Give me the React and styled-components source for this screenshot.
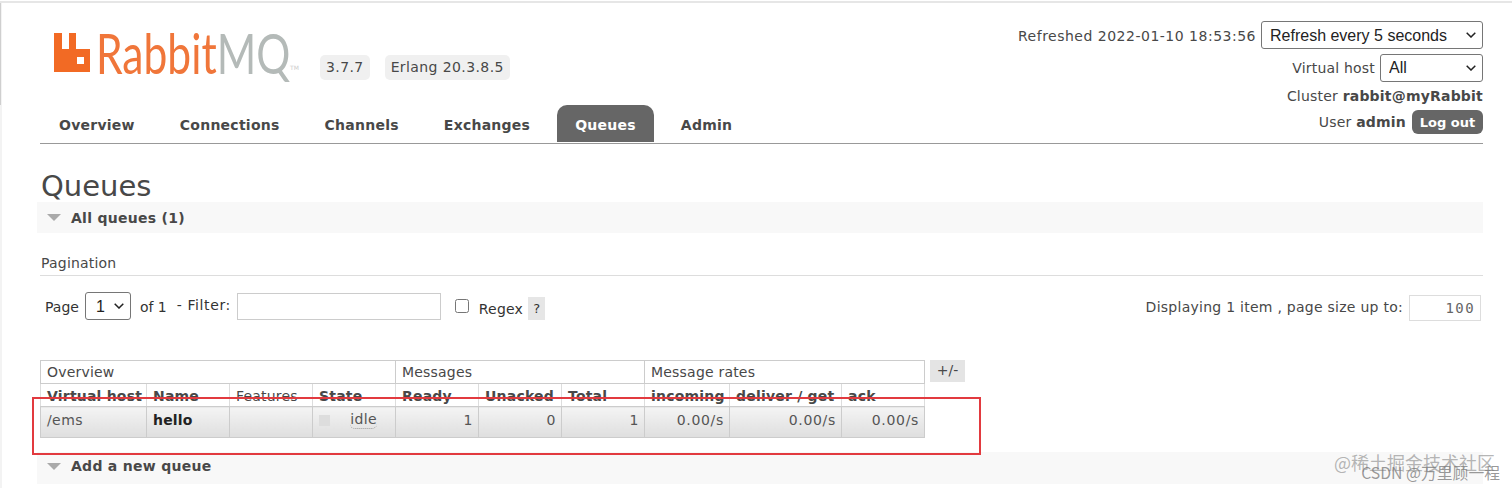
import styled, { createGlobalStyle } from "styled-components";

const GlobalStyle = createGlobalStyle`
  html, body { margin: 0; padding: 0; background: #fff; }
  body { font-family: "DejaVu Sans", Verdana, sans-serif; font-size: 14px; color: #484848; }
`;

const columns = [
  { name: "Virtual host", bold: true },
  { name: "Name", bold: true },
  { name: "Features" },
  { name: "State", bold: true },
  { name: "Ready", bold: true },
  { name: "Unacked", bold: true },
  { name: "Total", bold: true },
  { name: "incoming", bold: true },
  { name: "deliver / get", bold: true },
  { name: "ack", bold: true },
];

const widths = [106, 83, 83, 83, 83, 83, 83, 85, 112, 83];

const chevron =
  "data:image/svg+xml,%3Csvg xmlns='http://www.w3.org/2000/svg' width='10' height='6' viewBox='0 0 10 6'%3E%3Cpath d='M.7.7 5 5 9.3.7' fill='none' stroke='%23222' stroke-width='1.5'/%3E%3C/svg%3E";

function Logo() {
  return (
    <LogoWrap>
      <svg width="36" height="39" viewBox="0 0 36 39">
        <path
          fill="#f26a24"
          fillRule="evenodd"
          d="M0 0h8v16h7V0h7v16h14v23H0z M23 24v7h7v-7z"
        />
      </svg>
      <LogoText>
        <LogoRabbit>Rabbit</LogoRabbit>
        <LogoMq>MQ</LogoMq>
      </LogoText>
      <LogoTm>TM</LogoTm>
    </LogoWrap>
  );
}

function Collapse({ children, $low }) {
  return (
    <SectionBar $low={$low}>
      <Triangle />
      <SectionTitle>{children}</SectionTitle>
    </SectionBar>
  );
}

export default function App() {
  return (
    <Page>
      <GlobalStyle />
      <Header>
        <HeaderLeft>
          <Brand>
            <Logo />
            <Versions>
              <Pill>3.7.7</Pill>
              <Pill>Erlang 20.3.8.5</Pill>
            </Versions>
          </Brand>
          <Tabs>
            <Tab>Overview</Tab>
            <Tab>Connections</Tab>
            <Tab>Channels</Tab>
            <Tab>Exchanges</Tab>
            <Tab $active>Queues</Tab>
            <Tab>Admin</Tab>
          </Tabs>
        </HeaderLeft>
        <Meta>
          <MetaRow $height={34}>
            <Refreshed>Refreshed 2022-01-10 18:53:56</Refreshed>
            <Select $width={222} defaultValue="5">
              <option value="5">Refresh every 5 seconds</option>
            </Select>
          </MetaRow>
          <MetaRow $height={31}>
            <span>Virtual host</span>
            <Select $width={103} defaultValue="all">
              <option value="all">All</option>
            </Select>
          </MetaRow>
          <MetaRow $height={26}>
            <span>Cluster <b>rabbit@myRabbit</b></span>
          </MetaRow>
          <MetaRow $height={26}>
            <span>User <b>admin</b></span>
            <LogOut>Log out</LogOut>
          </MetaRow>
        </Meta>
      </Header>

      <Main>
        <Title>Queues</Title>
        <Collapse>All queues (1)</Collapse>
        <PaginationLabel>Pagination</PaginationLabel>
        <FilterRow>
          <FilterLeft>
            <FilterText>Page</FilterText>
            <PageSelect $width={46} defaultValue="1">
              <option value="1">1</option>
            </PageSelect>
            <OfText>of 1</OfText>
            <FilterLabel>- Filter:</FilterLabel>
            <FilterInput readOnly />
            <RegexBox type="checkbox" />
            <RegexText>Regex</RegexText>
            <Help>?</Help>
          </FilterLeft>
          <FilterRight>
            <FilterText>Displaying 1 item , page size up to:</FilterText>
            <PageSize readOnly value="100" />
          </FilterRight>
        </FilterRow>

        <TableRow>
          <Table>
            <colgroup>
              {widths.map((w, i) => (
                <col key={i} style={{ width: w }} />
              ))}
            </colgroup>
            <thead>
              <tr>
                <Group colSpan={4}>Overview</Group>
                <Group colSpan={3}>Messages</Group>
                <Group colSpan={3}>Message rates</Group>
              </tr>
              <tr>
                {columns.map((c) => (
                  <Head key={c.name} $bold={c.bold}>{c.name}</Head>
                ))}
              </tr>
            </thead>
            <tbody>
              <tr>
                <Cell>/ems</Cell>
                <Cell><b>hello</b></Cell>
                <Cell />
                <Cell>
                  <StateWrap>
                    <StateDot />
                    <Idle>idle</Idle>
                  </StateWrap>
                </Cell>
                <Cell $right>1</Cell>
                <Cell $right>0</Cell>
                <Cell $right>1</Cell>
                <Cell $right>0.00/s</Cell>
                <Cell $right>0.00/s</Cell>
                <Cell $right>0.00/s</Cell>
              </tr>
            </tbody>
          </Table>
          <PlusMinus>+/-</PlusMinus>
        </TableRow>

        <Collapse $low>Add a new queue</Collapse>
      </Main>

      <Highlight />
      <Watermark>@稀土掘金技术社区</Watermark>
      <Watermark $csdn>CSDN @万里顾一程</Watermark>
    </Page>
  );
}

const Page = styled.div`
  position: relative;
  width: 1512px;
  height: 485px;
  margin-top: 1px;
  overflow: hidden;
  border-top: 2px solid #e6e6e6;
  background:
    linear-gradient(#cfcfcf, #cfcfcf) 0 0 / 1px 102px no-repeat,
    linear-gradient(#f3f3f3, #f3f3f3) 0 0 / 2px 100% no-repeat;
`;

const Header = styled.header`
  display: flex;
  justify-content: space-between;
  align-items: flex-start;
  margin: 0 29px 0 40px;
  height: 140px;
  border-bottom: 1px solid #999;
`;

const HeaderLeft = styled.div`
  display: flex;
  flex-direction: column;
`;

const Brand = styled.div`
  display: flex;
  align-items: flex-end;
  height: 77px;
  padding-left: 14px;
`;

const LogoWrap = styled.div`
  position: relative;
  display: flex;
  align-items: flex-start;
  width: 266px;
  height: 47px;
  svg { flex-shrink: 0; margin-right: 6px; }
`;

const LogoText = styled.div`
  margin-top: -8px;
  white-space: nowrap;
  font-family: "Lato", sans-serif;
  font-weight: 400;
  font-size: 56px;
  line-height: 56px;
  transform: scaleX(0.76);
  transform-origin: left center;
`;

const LogoRabbit = styled.span`
  color: #f0763a;
`;

const LogoMq = styled.span`
  color: #b4bab8;
`;

const LogoTm = styled.span`
  position: absolute;
  left: 236px;
  top: 31px;
  font-size: 6px;
  color: #ccc;
`;

const Versions = styled.div`
  display: flex;
  gap: 15px;
`;

const Pill = styled.span`
  background: #f0f0f0;
  border-radius: 5px;
  padding: 0 6px;
  height: 25px;
  line-height: 25px;
  letter-spacing: 0.4px;
`;

const Tabs = styled.nav`
  display: flex;
  margin-top: 25px;
  padding-left: 1px;
  height: 37px;
`;

const Tab = styled.a`
  display: block;
  padding: 0 18px;
  margin-right: 9px;
  height: 37px;
  line-height: 40px;
  font-weight: bold;
  letter-spacing: 0.25px;
  border-radius: 10px 10px 0 0;
  color: ${(p) => (p.$active ? "#fff" : "#484848")};
  background: ${(p) => (p.$active ? "#666" : "transparent")};
`;

const Meta = styled.div`
  display: flex;
  flex-direction: column;
  align-items: flex-end;
  padding-top: 15px;
`;

const MetaRow = styled.div`
  display: flex;
  align-items: center;
  justify-content: flex-end;
  gap: 5px;
  height: ${(p) => p.$height}px;
  letter-spacing: 0.2px;
`;

const Refreshed = styled.span`
  letter-spacing: 0.5px;
  margin-top: 1px;
`;

const Select = styled.select`
  width: ${(p) => p.$width}px;
  height: 28px;
  box-sizing: border-box;
  padding: 0 18px 0 8px;
  appearance: none;
  font-family: "Liberation Sans", Arial, sans-serif;
  font-size: 16px;
  color: #222;
  background: #fff url("${chevron}") no-repeat right 6px center;
  border: 1px solid #767676;
  border-radius: 3px;
`;

const PageSelect = styled(Select)`
  margin-left: 6px;
  padding-left: 10px;
`;

const LogOut = styled.button`
  height: 24px;
  width: 71px;
  margin-left: 1px;
  padding: 0;
  border: 0;
  border-radius: 6px;
  background: #666;
  color: #fff;
  font-family: "DejaVu Sans", Verdana, sans-serif;
  font-size: 13px;
  font-weight: bold;
`;

const Main = styled.main`
  padding: 0 29px 0 40px;
`;

const Title = styled.h1`
  margin: 0;
  padding: 25px 0 0 1px;
  height: 33px;
  line-height: 35px;
  font-size: 29px;
  font-weight: normal;
  font-family: "DejaVu Sans", Verdana, sans-serif;
  color: #484848;
`;

const SectionBar = styled.div`
  display: flex;
  align-items: center;
  margin-left: -3px;
  height: ${(p) => (p.$low ? "28px" : "31px")};
  padding: ${(p) => (p.$low ? "0 0 4px 10px" : "0 0 0 10px")};
  background: #f8f8f8;
`;

const Triangle = styled.span`
  width: 0;
  height: 0;
  margin-right: 10px;
  border-left: 7px solid transparent;
  border-right: 7px solid transparent;
  border-top: 7px solid #aaa;
`;

const SectionTitle = styled.h2`
  margin: 0;
  font-size: 14px;
  font-weight: bold;
  letter-spacing: 0.28px;
  color: #484848;
`;

const PaginationLabel = styled.div`
  margin-top: 20px;
  padding-left: 1px;
  height: 22px;
  line-height: 21px;
  letter-spacing: 0.2px;
  border-bottom: 1px solid #ddd;
`;

const FilterRow = styled.div`
  display: flex;
  justify-content: space-between;
  align-items: center;
  height: 28px;
  margin-top: 16px;
  padding-right: 2px;
`;

const FilterLeft = styled.div`
  display: flex;
  align-items: center;
  padding-left: 5px;
  color: #333;
`;

const FilterText = styled.span`
  margin-top: 1px;
`;

const OfText = styled.span`
  margin: 1px 10px 0 9px;
`;

const FilterLabel = styled.span`
  margin-right: 6px;
  margin-top: -3px;
  letter-spacing: 0.6px;
`;

const FilterInput = styled.input`
  width: 204px;
  height: 27px;
  box-sizing: border-box;
  border: 1px solid #ccc;
  padding: 0;
  margin-right: 14px;
`;

const RegexBox = styled.input`
  width: 14px;
  height: 14px;
  margin: 0 10px 0 0;
`;

const RegexText = styled.span`
  margin-top: 5px;
  margin-right: 5px;
  letter-spacing: 0.2px;
`;

const Help = styled.span`
  display: block;
  width: 17px;
  height: 23px;
  line-height: 23px;
  margin-top: 4px;
  text-align: center;
  background: #e6e6e6;
  font-size: 13px;
`;

const FilterRight = styled.div`
  display: flex;
  align-items: center;
  gap: 6px;
  letter-spacing: 0.26px;
`;

const PageSize = styled.input`
  width: 72px;
  height: 26px;
  margin-top: 3px;
  box-sizing: border-box;
  border: 1px solid #ddd;
  padding: 0 5px 0 0;
  text-align: right;
  font-family: "DejaVu Sans Mono", monospace;
  font-size: 14px;
  letter-spacing: 1.4px;
  color: #666;
`;

const TableRow = styled.div`
  display: flex;
  align-items: flex-start;
  gap: 5px;
  margin-top: 40px;
  margin-bottom: 14px;
`;

const Table = styled.table`
  border-collapse: collapse;
  table-layout: fixed;
  width: 884px;
  letter-spacing: 0.2px;
`;

const Group = styled.th`
  height: 22px;
  padding: 0 6px;
  border: 1px solid #ccc;
  font-weight: normal;
  text-align: left;
  color: #484848;
`;

const Head = styled.th`
  height: 21px;
  padding: 1px 6px 0;
  border: 1px solid #ddd;
  border-bottom-color: #ccc;
  white-space: nowrap;
  overflow: hidden;
  text-align: left;
  font-weight: ${(p) => (p.$bold ? "bold" : "normal")};
  color: #484848;
`;

const Cell = styled.td`
  height: 26px;
  padding: 0 5px 4px 6px;
  border: 1px solid #ccc;
  background: linear-gradient(#f4f4f4, #dedede);
  text-align: ${(p) => (p.$right ? "right" : "left")};
  letter-spacing: ${(p) => (p.$right ? "0.7px" : "0.4px")};
  color: #555;
  b { color: #222; letter-spacing: 0.2px; }
`;

const StateWrap = styled.div`
  display: flex;
  align-items: center;
  justify-content: space-between;
  padding-right: 13px;
`;

const StateDot = styled.span`
  width: 11px;
  height: 11px;
  background: #ddd;
`;

const Idle = styled.span`
  border-bottom: 1px dotted #999;
  border-radius: 0 0 5px 5px;
  line-height: 17px;
`;

const PlusMinus = styled.div`
  width: 35px;
  height: 22px;
  line-height: 21px;
  text-align: center;
  background: #e4e4e4;
`;

const Highlight = styled.div`
  position: absolute;
  left: 32px;
  top: 394px;
  width: 945px;
  height: 54px;
  border: 2px solid #e23a3f;
  pointer-events: none;
`;

const Watermark = styled.span`
  position: absolute;
  right: ${(p) => (p.$csdn ? "12px" : "17px")};
  top: ${(p) => (p.$csdn ? "458px" : "446px")};
  font-family: "Noto Sans CJK SC", sans-serif;
  font-size: ${(p) => (p.$csdn ? "15.8px" : "18px")};
  color: ${(p) => (p.$csdn ? "rgba(120,120,120,0.75)" : "rgba(150,150,150,0.7)")};
  white-space: nowrap;
`;
